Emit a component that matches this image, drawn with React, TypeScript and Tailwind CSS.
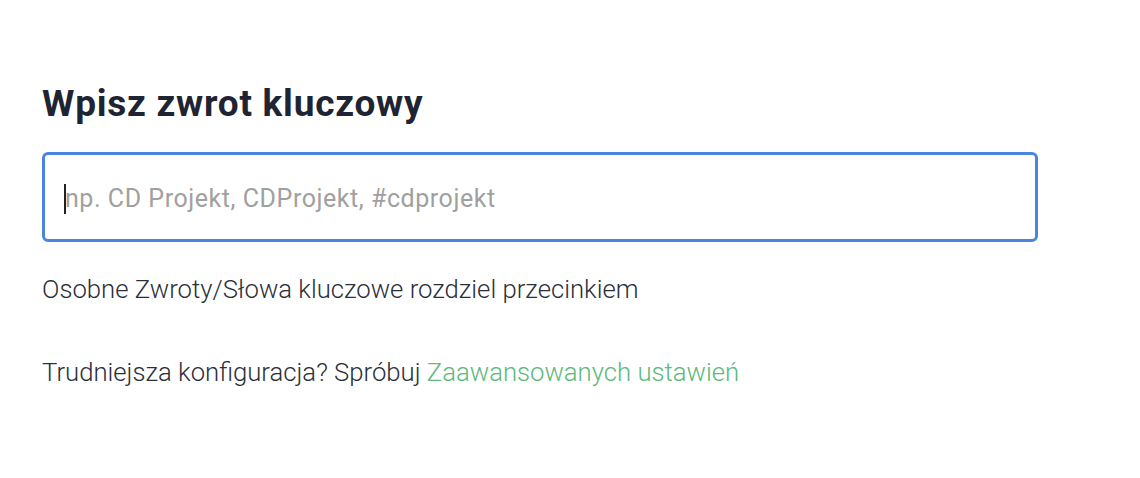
import React from "react";

export default function App() {
  return (
    <div className="w-[1140px] h-[478px] bg-white" style={{ fontFamily: "Roboto, sans-serif" }}>
      <div className="pl-[42px] pt-[81px] w-[1038px]">
        <h1 className="text-[37px] leading-[46px] font-bold tracking-[0.75px] text-[#1f2432]">Wpisz zwrot kluczowy</h1>
        <div className="mt-[25px] h-[90px] border-[3px] border-[#4a86e0] rounded-[6px] flex items-center pl-[19px] pt-[3px]">
          <span className="w-[2px] h-[30px] bg-[#222]"></span>
          <span className="text-[25px] font-normal tracking-[0.55px] text-[#a0a0a0] ml-[-1px]">np. CD Projekt, CDProjekt, #cdprojekt</span>
        </div>
        <p className="mt-[30px] text-[25.7px] leading-[34px] font-light text-[#2b2f3a]">Osobne Zwroty/Słowa kluczowe rozdziel przecinkiem</p>
        <p className="mt-[49px] text-[25.7px] leading-[34px] font-light text-[#2b2f3a]">
          Trudniejsza konfiguracja? Spróbuj <span className="text-[#5db97c]">Zaawansowanych ustawień</span>
        </p>
      </div>
    </div>
  );
}
